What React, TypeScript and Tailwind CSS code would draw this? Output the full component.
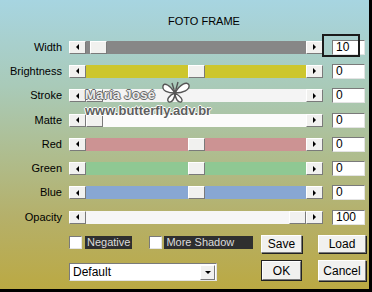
import React from "react";

type Row = { label: string; track: string; thumb: number; value: string; focus?: boolean };

const ROWS: Row[] = [
  { label: "Width", track: "bg-[#878787]", thumb: 4, value: "10", focus: true },
  { label: "Brightness", track: "bg-[#cdc62d]", thumb: 102, value: "0" },
  { label: "Stroke", track: "bg-[#f4f4f4]", thumb: 0, value: "0" },
  { label: "Matte", track: "bg-[#fbfbfb]", thumb: 0, value: "0" },
  { label: "Red", track: "bg-[#cc9393]", thumb: 102, value: "0" },
  { label: "Green", track: "bg-[#8fc893]", thumb: 102, value: "0" },
  { label: "Blue", track: "bg-[#88a7d3]", thumb: 102, value: "0" },
  { label: "Opacity", track: "bg-[#f6f6f6]", thumb: 203, value: "100" },
];

const raised =
  "border border-t-white border-l-white border-r-[#7a7a7a] border-b-[#7a7a7a] bg-[#f1f1ef]";
const sunken =
  "border border-t-[#7a7a7a] border-l-[#7a7a7a] border-r-[#e4e4e4] border-b-[#e4e4e4] bg-white";

function Arrow({ dir }: { dir: "left" | "right" | "down" }) {
  const pts = dir === "left" ? "4,0 4,6 1,3" : dir === "right" ? "1,0 1,6 4,3" : "0,1 6,1 3,4";
  return (
    <svg width={dir === "down" ? 6 : 5} height={dir === "down" ? 5 : 6} viewBox={dir === "down" ? "0 0 6 5" : "0 0 5 6"}>
      <polygon points={pts} fill="#000" />
    </svg>
  );
}

function SliderRow({ row }: { row: Row }) {
  return (
    <div className="flex items-center h-[24.3px]">
      <div className="w-[62px] text-right text-[11px] leading-none text-black">{row.label}</div>
      <div className={`ml-[7px] w-[17px] h-[13px] flex items-center justify-center ${raised}`}>
        <Arrow dir="left" />
      </div>
      <div className={`relative w-[220px] h-[13px] ${row.track}`}>
        <div className={`absolute top-0 w-[17px] h-[13px] ${raised}`} style={{ left: row.thumb }} />
      </div>
      <div className={`w-[17px] h-[13px] flex items-center justify-center ${raised}`}>
        <Arrow dir="right" />
      </div>
      <div className={`relative ml-[9px] w-[33px] h-[15px] pl-[3px] text-[12px] leading-[13px] ${sunken}`}>
        {row.value}
        {row.focus && (
          <div className="absolute left-[-11px] top-[-7px] w-[38px] h-[23px] border-2 border-[#1b1b1b]" />
        )}
      </div>
    </div>
  );
}

function Butterfly() {
  return (
    <svg width="30" height="24" viewBox="0 0 30 24" fill="none" stroke="#555" strokeWidth="1.4">
      <path d="M14 13 C9 5 3 2 2 6 C1 11 7 13 14 13 Z" fill="#fff" />
      <path d="M14 13 C19 4 26 1 28 5 C29 10 22 13 14 13 Z" fill="#fff" />
      <path d="M14 13 C8 15 5 20 8 22 C11 23 14 18 14 13 Z" fill="#fff" />
      <path d="M14 13 C19 16 23 20 20 22 C17 23 14 18 14 13 Z" fill="#fff" />
      <path d="M14 13 L11 3 M14 13 L17 2" />
    </svg>
  );
}

export default function App() {
  return (
    <div
      className="relative w-[372px] h-[292px] overflow-hidden border-r-[3px] border-b-[3px] border-black bg-[linear-gradient(180deg,#a7d5e1_0%,#a9cab8_30%,#afbc8c_55%,#b5b06a_75%,#bba943_100%)]"
      style={{ fontFamily: '"Liberation Sans", Arial, sans-serif' }}
    >
      <div className="pl-[168px] pt-[16px] h-[35px] text-[11px] leading-none text-black">FOTO FRAME</div>

      <div className="flex flex-col">
        {ROWS.map((r) => (
          <SliderRow key={r.label} row={r} />
        ))}
      </div>

      <div className="flex pl-[69px] mt-[5px]">
        <div className="w-[192px] flex flex-col">
          <div className="flex items-center mt-[1px] h-[14px] text-[11px] leading-none">
            <div className={`w-[13px] h-[13px] ${sunken}`} />
            <div className="ml-[3px] h-[13px] px-[2px] flex items-center bg-[#2f2f2f] text-[#dcdcdc]">Negative</div>
            <div className={`ml-[17px] w-[13px] h-[13px] ${sunken}`} />
            <div className="ml-[2px] h-[13px] w-[89px] px-[2px] flex items-center bg-[#2f2f2f] text-[#dcdcdc]">More Shadow</div>
          </div>
          <div className={`mt-[14px] w-[148px] h-[18px] flex items-center justify-between ${sunken}`}>
            <span className="pl-[3px] text-[12px] leading-none">Default</span>
            <div className={`w-[15px] h-[15px] mr-[1px] flex items-center justify-center ${raised}`}>
              <Arrow dir="down" />
            </div>
          </div>
        </div>
        <div className="flex flex-col text-[12px] leading-none">
          <div className="flex mt-[1px] gap-[16px]">
            <div className={`w-[41px] h-[18px] flex items-center justify-center shadow-[1px_1px_0_#222] ${raised}`}>Save</div>
            <div className={`w-[48px] h-[18px] flex items-center justify-center shadow-[1px_1px_0_#222] ${raised}`}>Load</div>
          </div>
          <div className="flex mt-[7px] gap-[16px]">
            <div className="w-[41px] h-[21px] border border-[#222] flex">
              <div className={`flex-1 flex items-center justify-center ${raised}`}>OK</div>
            </div>
            <div className={`w-[48px] h-[21px] flex items-center justify-center shadow-[1px_1px_0_#222] ${raised}`}>Cancel</div>
          </div>
        </div>
      </div>

      <div className="absolute left-[85px] top-[80px] pointer-events-none">
        <div className="flex items-end">
          <span
            className="text-[13px] font-bold leading-none text-[#ececec] tracking-[0.3px] mb-[1px]"
            style={{ textShadow: "1px 0 0 #666, -1px 0 0 #666, 0 1px 0 #666, 0 -1px 0 #666" }}
          >
            María José
          </span>
          <span className="ml-[6px] mb-[-2px]">
            <Butterfly />
          </span>
        </div>
        <div
          className="mt-[2px] text-[13px] font-bold leading-none text-[#5e5e5e]"
          style={{ textShadow: "1px 0 0 #fff, -1px 0 0 #fff, 0 1px 0 #fff, 0 -1px 0 #fff" }}
        >
          www.butterfly.adv.br
        </div>
      </div>
    </div>
  );
}
